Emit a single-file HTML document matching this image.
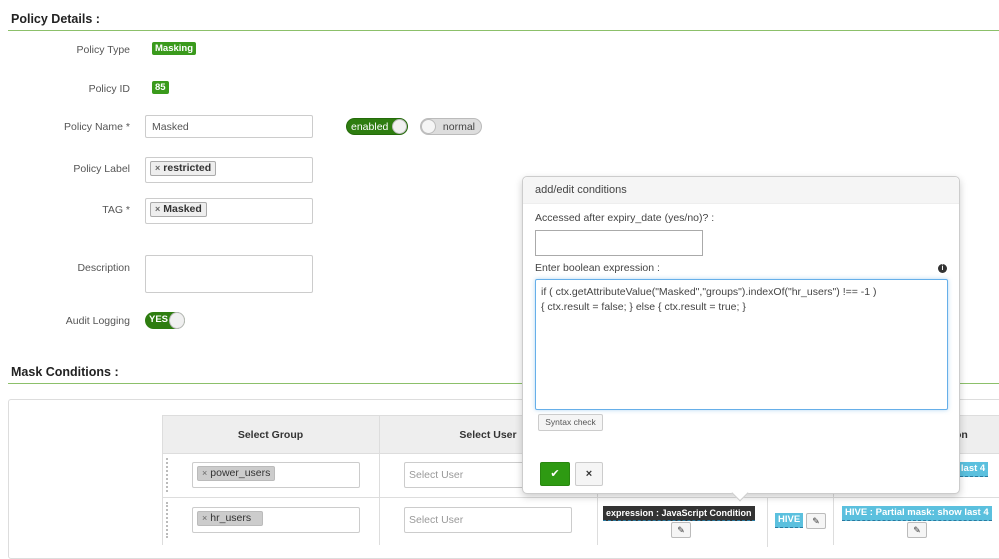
<!DOCTYPE html>
<html><head><meta charset="utf-8"><style>
*{box-sizing:border-box;margin:0;padding:0}
body{width:999px;height:541px;overflow:hidden;background:#fff;font-family:"Liberation Sans",sans-serif;font-size:11px;color:#444;position:relative}
.a{position:absolute}
.h{font-weight:bold;font-size:12.5px;color:#222}
.line{height:1px;background:#8cc06a}
.lbl{width:130px;text-align:right;font-size:10.5px;color:#555}
.inp{border:1px solid #ccc;border-radius:2px;background:#fff}
.badge{background:#3a9a1c;color:#fff;font-weight:bold;font-size:9.5px;border-radius:2px;padding:1px 3px;line-height:11px}
.chip{border:1px solid #aaa;background:#eee;border-radius:2px;font-weight:bold;font-size:10.5px;color:#333;padding:0 4px;line-height:13px}
.chip i{font-style:normal;font-size:9px;color:#666;margin-right:3px}
.pen{border:1px solid #bbb;background:#f5f5f5;border-radius:2px;width:20px;height:16px;text-align:center;font-size:9px;line-height:14px;color:#333}
.cyan{background:#5bc0de;color:#fff;font-weight:bold;font-size:9.5px;padding:1px 3px;line-height:12px;border-bottom:1px dashed #2a7aa0}
</style></head><body>
<div class="a h" style="left:11px;top:12px">Policy Details :</div>
<div class="a line" style="left:8px;top:30px;width:991px"></div>

<div class="a lbl" style="left:0;top:44px">Policy Type</div>
<div class="a badge" style="left:152px;top:42px">Masking</div>
<div class="a lbl" style="left:0;top:83px">Policy ID</div>
<div class="a badge" style="left:152px;top:81px">85</div>
<div class="a lbl" style="left:0;top:121px">Policy Name *</div>
<div class="a inp" style="left:145px;top:115px;width:168px;height:23px;padding:5px 6px;font-size:10.5px;color:#555">Masked</div>
<div class="a" style="left:346px;top:118px;width:62px;height:17px;border-radius:9px;background:#2e7d10;border:1px solid #246b0a"><span style="position:absolute;left:4px;top:2px;color:#fff;font-size:10.5px">enabled</span><span style="position:absolute;right:0;top:0;width:15px;height:15px;border-radius:50%;background:#f0f0f0;border:1px solid #bbb"></span></div>
<div class="a" style="left:420px;top:118px;width:62px;height:17px;border-radius:9px;background:#ddd;border:1px solid #bbb"><span style="position:absolute;left:0;top:0;width:15px;height:15px;border-radius:50%;background:#f5f5f5;border:1px solid #bbb"></span><span style="position:absolute;right:6px;top:2px;color:#444;font-size:10.5px">normal</span></div>

<div class="a lbl" style="left:0;top:163px">Policy Label</div>
<div class="a inp" style="left:145px;top:157px;width:168px;height:26px"></div>
<div class="a chip" style="left:150px;top:161px"><i>×</i>restricted</div>
<div class="a lbl" style="left:0;top:204px">TAG *</div>
<div class="a inp" style="left:145px;top:198px;width:168px;height:26px"></div>
<div class="a chip" style="left:150px;top:202px"><i>×</i>Masked</div>
<div class="a lbl" style="left:0;top:262px">Description</div>
<div class="a inp" style="left:145px;top:255px;width:168px;height:38px"></div>
<div class="a lbl" style="left:0;top:315px">Audit Logging</div>
<div class="a" style="left:145px;top:312px;width:40px;height:17px;border-radius:9px;background:#2e7d10"><span style="position:absolute;left:4px;top:2px;color:#fff;font-size:9.5px;font-weight:bold">YES</span><span style="position:absolute;right:0;top:0;width:16px;height:17px;border-radius:50%;background:#f0f0f0;border:1px solid #bbb"></span></div>

<div class="a h" style="left:11px;top:365px">Mask Conditions :</div>
<div class="a line" style="left:8px;top:383px;width:991px"></div>
<div class="a" style="left:8px;top:399px;width:1000px;height:160px;border:1px solid #ddd;border-radius:3px"></div>

<div class="a" style="left:162px;top:415px;width:840px;height:39px;background:#eee;border:1px solid #ddd"></div>
<div class="a" style="left:162px;top:453px;width:840px;height:1px;background:#ddd"></div>
<div class="a" style="left:162px;top:497px;width:840px;height:1px;background:#ddd"></div>
<div class="a" style="left:162px;top:415px;width:1px;height:130px;background:#ddd"></div>
<div class="a" style="left:379px;top:415px;width:1px;height:130px;background:#ddd"></div>
<div class="a" style="left:597px;top:415px;width:1px;height:130px;background:#ddd"></div>
<div class="a" style="left:767px;top:497px;width:1px;height:50px;background:#ddd"></div>
<div class="a" style="left:833px;top:415px;width:1px;height:130px;background:#ddd"></div>
<div class="a" style="left:162px;top:429px;width:217px;text-align:center;font-weight:bold;font-size:10.5px;color:#333">Select Group</div>
<div class="a" style="left:379px;top:429px;width:218px;text-align:center;font-weight:bold;font-size:10.5px;color:#333">Select User</div>
<div class="a" style="left:955px;top:429px;font-weight:bold;font-size:10.5px;color:#333">on</div>
<div class="a" style="left:166px;top:458px;width:4px;height:34px;border-left:2px dotted #bbb"></div>
<div class="a" style="left:166px;top:502px;width:4px;height:36px;border-left:2px dotted #bbb"></div>
<div class="a inp" style="left:192px;top:462px;width:168px;height:26px"></div>
<div class="a chip" style="left:197px;top:466px;font-weight:normal;background:#ccc;border-color:#bbb"><i>×</i>power_users</div>
<div class="a inp" style="left:404px;top:462px;width:168px;height:26px;padding:6px 4px;color:#999;font-size:10.5px">Select User</div>
<div class="a inp" style="left:192px;top:507px;width:168px;height:26px"></div>
<div class="a chip" style="left:197px;top:511px;font-weight:normal;background:#ccc;border-color:#bbb;width:66px"><i>×</i>hr_users</div>
<div class="a inp" style="left:404px;top:507px;width:168px;height:26px;padding:6px 4px;color:#999;font-size:10.5px">Select User</div>
<div class="a cyan" style="left:950px;top:462px">v last 4</div>
<div class="a" style="left:603px;top:506px;background:#333;color:#fff;font-weight:bold;font-size:9px;padding:1px 3px;line-height:12px;border-bottom:1px dashed #2a7aa0">expression : JavaScript Condition</div>
<div class="a pen" style="left:671px;top:522px">✎</div>
<div class="a cyan" style="left:775px;top:513px">HIVE</div>
<div class="a pen" style="left:806px;top:513px">✎</div>
<div class="a cyan" style="left:842px;top:506px">HIVE : Partial mask: show last 4</div>
<div class="a pen" style="left:907px;top:522px">✎</div>

<!-- modal -->
<div class="a" style="left:522px;top:176px;width:438px;height:318px;background:#fff;border:1px solid #ccc;border-radius:5px;box-shadow:0 3px 8px rgba(0,0,0,.2)">
 <div style="height:27px;background:#f5f5f5;border-bottom:1px solid #eee;border-radius:5px 5px 0 0;padding:7px 12px;font-size:11px;color:#444">add/edit conditions</div>
</div>
<div class="a" style="left:734px;top:487px;width:12px;height:12px;background:#fff;transform:rotate(45deg);border-right:1px solid #ccc;border-bottom:1px solid #ccc"></div>
<div class="a" style="left:535px;top:212px;font-size:10.5px;color:#444">Accessed after expiry_date (yes/no)? :</div>
<div class="a" style="left:535px;top:230px;width:168px;height:26px;border:1px solid #aaa"></div>
<div class="a" style="left:535px;top:262px;font-size:10.5px;color:#444">Enter boolean expression :</div>
<div class="a" style="left:938px;top:264px;width:9px;height:9px;border-radius:50%;background:#333;color:#fff;font-size:7px;font-weight:bold;text-align:center;line-height:9px">i</div>
<div class="a" style="left:535px;top:279px;width:413px;height:131px;border:1px solid #66afe9;border-radius:2px;box-shadow:0 0 4px rgba(102,175,233,.5);padding:5px 5px;font-size:10.5px;line-height:15px;color:#444">if ( ctx.getAttributeValue("Masked","groups").indexOf("hr_users") !== -1 )<br>{ ctx.result = false; } else { ctx.result = true; }</div>
<div class="a" style="left:538px;top:414px;width:65px;height:17px;border:1px solid #ccc;background:#f5f5f5;border-radius:2px;font-size:8.5px;text-align:center;line-height:15px;color:#555">Syntax check</div>
<div class="a" style="left:540px;top:462px;width:30px;height:24px;background:#2e9a12;border:1px solid #28870f;border-radius:2px;color:#fff;text-align:center;line-height:22px;font-size:11px">✔</div>
<div class="a" style="left:575px;top:462px;width:28px;height:24px;background:#f5f5f5;border:1px solid #ccc;border-radius:2px;color:#333;text-align:center;line-height:22px;font-size:11px;font-weight:bold">×</div>
</body></html>
